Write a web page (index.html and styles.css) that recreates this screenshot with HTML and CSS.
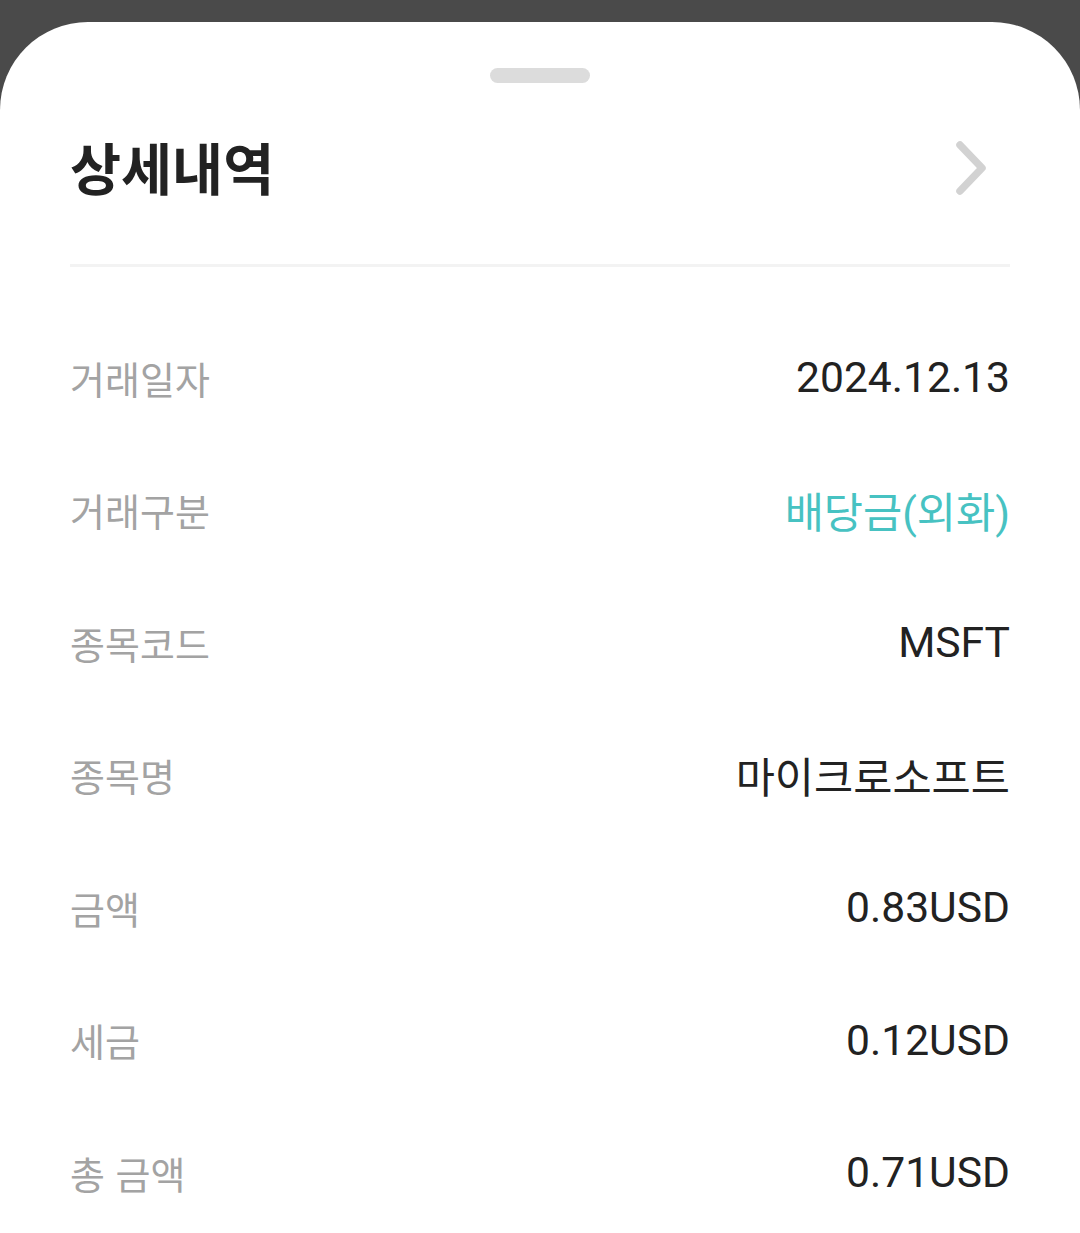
FILE: index.html
```html
<!DOCTYPE html>
<html lang="ko">
<head>
<meta charset="utf-8">
<link rel="stylesheet" href="styles.css">
</head>
<body>
<div class="sheet">
  <div class="handle"></div>
  <div class="header">
    <h1 class="title">상세내역</h1>
    <svg class="chevron" width="40" height="60" viewBox="0 0 40 60">
      <polyline points="8,7 30,30 8,53" fill="none" stroke="#d2d2d2" stroke-width="7.5" stroke-linecap="round" stroke-linejoin="round"/>
    </svg>
  </div>
  <div class="divider"></div>
  <div class="rows">
    <div class="row"><span class="label">거래일자</span><span class="value">2024.12.13</span></div>
    <div class="row"><span class="label">거래구분</span><span class="value teal">배당금(외화)</span></div>
    <div class="row"><span class="label">종목코드</span><span class="value">MSFT</span></div>
    <div class="row"><span class="label">종목명</span><span class="value">마이크로소프트</span></div>
    <div class="row"><span class="label">금액</span><span class="value">0.83USD</span></div>
    <div class="row"><span class="label">세금</span><span class="value">0.12USD</span></div>
    <div class="row"><span class="label">총 금액</span><span class="value">0.71USD</span></div>
  </div>
</div>
</body>
</html>
```
FILE: styles.css
```css
html, body {
  margin: 0;
  padding: 0;
  background: #4a4a4a;
  height: 100%;
  overflow: hidden;
}
body {
  font-family: Roboto, "Noto Sans CJK KR", sans-serif;
}
.sheet {
  margin-top: 22px;
  background: #ffffff;
  border-radius: 88px 88px 0 0;
  min-height: 1211px;
  padding: 46px 70px 0;
  box-sizing: border-box;
  display: flex;
  flex-direction: column;
}
.handle {
  align-self: center;
  width: 100px;
  height: 15px;
  border-radius: 8px;
  background: #dcdcdc;
}
.header {
  margin-top: 17px;
  height: 132px;
  display: flex;
  align-items: center;
  justify-content: space-between;
}
.title {
  margin: 0;
  font-family: "Noto Sans CJK KR", sans-serif;
  font-weight: 700;
  font-size: 55.5px;
  color: #222222;
}
.chevron {
  margin-right: 18px;
  margin-top: 4px;
}
.divider {
  margin-top: 32px;
  height: 3px;
  background: #f3f3f3;
}
.rows {
  padding-top: 44px;
  display: flex;
  flex-direction: column;
}
.row {
  height: 132.5px;
  display: flex;
  align-items: center;
  justify-content: space-between;
}
.label {
  font-family: "Noto Sans CJK KR", sans-serif;
  font-size: 38px;
  color: #a3a3a3;
}
.value {
  font-family: Roboto, "Noto Sans CJK KR", sans-serif;
  font-size: 42.6px;
  color: #222222;
}
.teal {
  color: #47c2c2;
}
```
